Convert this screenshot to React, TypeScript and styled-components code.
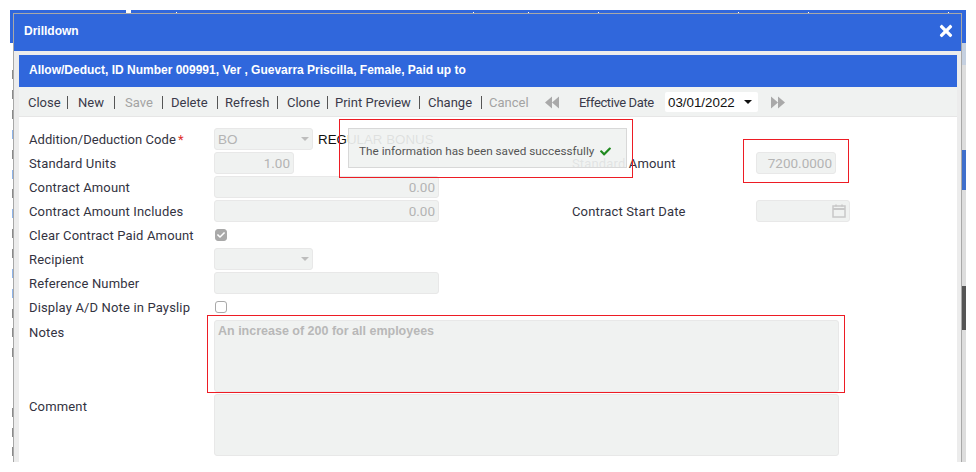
import React from 'react';
import styled, { createGlobalStyle } from 'styled-components';
import { FaCheck, FaTimes } from 'react-icons/fa';

const GlobalStyle = createGlobalStyle`
  html, body {
    margin: 0;
    padding: 0;
    background: #fff;
  }
  body {
    width: 976px;
    height: 472px;
    overflow: hidden;
    font-family: Roboto, "Liberation Sans", sans-serif;
  }
`;

const Shot = styled.div`
  width: 976px;
  height: 472px;
  padding: 10px;
  box-sizing: border-box;
`;

// little white ticks in the blue bar of the page behind the dialog
const ticks = [166, 463, 518, 588, 728, 798, 938]
  .map(x => `linear-gradient(#fff, #fff) ${x}px 2px / 1px 1px no-repeat`)
  .join(', ');

const Backdrop = styled.div`
  width: 956px;
  height: 452px;
  display: flex;
  overflow: hidden;
  background:
    ${ticks},
    linear-gradient(#fff, #fff) 116px 0 / 5px 3px no-repeat,
    linear-gradient(#3067dc, #3067dc) 0 0 / 100% 3px no-repeat;
`;

const LeftStrip = styled.div`
  width: 3px;
  flex: none;
  padding-top: 55px;
  box-sizing: border-box;
  background: linear-gradient(#3067dc 33px, #fff 33px);
  display: flex;
  flex-direction: column;
  overflow: hidden;
`;

const StripRow = styled.div`
  height: 20px;
  display: flex;
  justify-content: flex-end;
  align-items: center;
`;

const StripMark = styled.span<{ $blue?: boolean }>`
  width: 1px;
  height: 9px;
  background: ${p => (p.$blue ? '#8fb4e8' : '#8a8a8a')};
`;

const RightStrip = styled.div`
  width: 4px;
  flex: none;
  background: linear-gradient(
    #3067dc 33px,
    #c5d0e0 33px 55px,
    #ddd 55px 140px,
    #3f6fcb 140px 180px,
    #ddd 180px 276px,
    #555 276px 320px,
    #ddd 320px
  );
`;

const Dialog = styled.div`
  flex: 1;
  margin-top: 3px;
  border: 1px solid #a8a8a8;
  border-bottom: 0;
  background: #ececec;
  display: flex;
  flex-direction: column;
  min-width: 0;
`;

const DialogHeader = styled.div`
  height: 37px;
  flex: none;
  background: #3067dc;
  color: #fff;
  display: flex;
  align-items: center;
  justify-content: space-between;
  padding: 0 6px 4px 10px;
  box-sizing: border-box;
  font: bold 12px "Liberation Sans", sans-serif;
`;

const Panel = styled.div`
  flex: 1;
  margin: 4px 4px 0 5px;
  background: #fff;
  display: flex;
  flex-direction: column;
  position: relative;
  min-height: 0;
`;

const TitleBar = styled.div`
  height: 32px;
  flex: none;
  background: #3067dc;
  color: #fff;
  display: flex;
  align-items: center;
  padding: 0 0 2px 10px;
  box-sizing: border-box;
  font: bold 12px "Liberation Sans", sans-serif;
`;

const Toolbar = styled.div`
  height: 30px;
  flex: none;
  background: #f0f2f1;
  border-bottom: 1px solid #e6e6e6;
  box-sizing: border-box;
  display: flex;
  align-items: center;
  padding: 1px 0 0 9px;
  font-size: 13px;
  color: #3a3a4a;
`;

const ToolButton = styled.span<{ $left: number; $width: number; $disabled?: boolean; $last?: boolean }>`
  margin-left: ${p => p.$left}px;
  width: ${p => p.$width}px;
  box-sizing: border-box;
  line-height: 13px;
  white-space: nowrap;
  border-right: ${p => (p.$last ? '0' : '1px solid #555')};
  color: ${p => (p.$disabled ? '#a3a3a3' : '#3a3a4a')};
`;

const EffectiveDate = styled.span`
  width: 86px;
  margin-left: 20px;
  letter-spacing: -0.4px;
  white-space: nowrap;
`;

const DateSelect = styled.div`
  width: 93px;
  height: 20px;
  margin-right: 13px;
  padding: 0 6px 0 3px;
  box-sizing: border-box;
  background: #fff;
  border-radius: 2px;
  display: flex;
  align-items: center;
  justify-content: space-between;
  font: 13.33px "Liberation Sans", sans-serif;
  color: #111;
`;

const Caret = styled.span<{ $muted?: boolean }>`
  width: 0;
  height: 0;
  border-left: 4px solid transparent;
  border-right: 4px solid transparent;
  border-top: 4px solid ${p => (p.$muted ? '#bdbdbd' : '#111')};
`;

const Form = styled.div`
  padding: 11px 0 0 10px;
  display: grid;
  grid-template-columns: 185px 358px 184px 1fr;
  grid-template-rows: repeat(8, 22px) 72px 62px;
  row-gap: 2px;
  align-items: center;
  font-size: 13px;
  letter-spacing: 0.15px;
  color: #33333f;
`;

const Label = styled.label<{ $top?: boolean; $tight?: boolean }>`
  grid-column: 1;
  white-space: nowrap;
  align-self: ${p => (p.$top ? 'start' : 'center')};
  line-height: ${p => (p.$top ? '26px' : 'normal')};
  letter-spacing: ${p => (p.$tight ? '0.05px' : 'inherit')};
`;

const SideLabel = styled.label`
  grid-column: 3;
  white-space: nowrap;
`;

const Star = styled.span`
  color: #e0302a;
  margin-left: 2px;
`;

const Cell = styled.div`
  grid-column: 2;
`;

const SideCell = styled.div`
  grid-column: 4;
`;

const Control = styled.div<{ $width: number }>`
  width: ${p => p.$width}px;
  height: 22px;
  box-sizing: border-box;
  background: #f0f2f1;
  border: 1px solid #e8e8e8;
  border-radius: 3px;
  display: flex;
  align-items: center;
  justify-content: space-between;
  padding: 0 3px;
  color: #b4b4b4;
  font-size: 13.5px;
  letter-spacing: 0;
`;

const NumberControl = styled(Control)`
  justify-content: flex-end;
`;

const CodeRow = styled.div`
  grid-column: 2;
  display: flex;
  align-items: center;
  gap: 5px;
  font: 13.33px "Liberation Sans", sans-serif;
  letter-spacing: 0;
  color: #111;
`;

const Check = styled.span<{ $checked?: boolean }>`
  width: 12px;
  height: 12px;
  margin-left: 1px;
  box-sizing: border-box;
  border-radius: 3px;
  border: 1px solid #a9a9a9;
  background: ${p => (p.$checked ? '#a9a9a9' : '#fff')};
  color: #fff;
  display: flex;
  align-items: center;
  justify-content: center;
  font-size: 8px;
`;

const TextArea = styled.div`
  grid-column: 2 / 5;
  width: 625px;
  height: 100%;
  box-sizing: border-box;
  background: #f0f2f1;
  border: 1px solid #e8e8e8;
  border-radius: 3px;
  padding: 3px 3px;
  color: #b8b8b8;
  font: bold 12.5px "Liberation Sans", sans-serif;
  letter-spacing: 0;
`;

const Toast = styled.div`
  position: absolute;
  left: 329px;
  top: 73px;
  width: 279px;
  height: 40px;
  box-sizing: border-box;
  background: rgba(240, 242, 241, 0.92);
  border: 1px solid #d8d8d8;
  display: flex;
  align-items: center;
  padding: 6px 0 0 10px;
  font-size: 11.75px;
  color: #555;
  gap: 6px;
`;

const RedBox = styled.div<{ $l: number; $t: number; $w: number; $h: number }>`
  position: absolute;
  left: ${p => p.$l}px;
  top: ${p => p.$t}px;
  width: ${p => p.$w}px;
  height: ${p => p.$h}px;
  box-sizing: border-box;
  border: 1px solid #ed1c24;
`;

const CalendarIcon = () => (
  <svg width="14" height="14" viewBox="0 0 14 14" fill="none" stroke="#c8c8c8" strokeWidth="1.5">
    <rect x="1" y="2" width="12" height="11" />
    <path d="M1 5h12" strokeWidth="2" />
    <path d="M4 .5v2M10 .5v2" />
  </svg>
);

const SkipIcon = ({ flip }: { flip?: boolean }) => (
  <svg width="14" height="13" viewBox="0 0 15 13" fill="#a9a9a9" style={flip ? { transform: 'scaleX(-1)' } : undefined}>
    <path d="M0 0l7.5 6.5L0 13zM7.5 0L15 6.5 7.5 13z" />
  </svg>
);

const tools: { name: string; left: number; width: number; disabled?: boolean; last?: boolean }[] = [
  { name: 'Close', left: 0, width: 40 },
  { name: 'New', left: 10, width: 37 },
  { name: 'Save', left: 10, width: 38, disabled: true },
  { name: 'Delete', left: 8, width: 47 },
  { name: 'Refresh', left: 7, width: 53 },
  { name: 'Clone', left: 9, width: 41 },
  { name: 'Print Preview', left: 7, width: 85 },
  { name: 'Change', left: 8, width: 54 },
  { name: 'Cancel', left: 7, width: 56, disabled: true, last: true },
];

// what shows of the page's text rows, in the sliver left of the dialog
const stripRows: ('grey' | 'blue' | null)[] = [
  'grey', 'grey', 'grey', 'blue', 'grey', 'blue', 'grey', 'blue', 'grey', 'grey',
  'blue', 'blue', 'grey', 'grey', 'grey', null, null, 'grey', 'grey', 'grey',
];

export default function App() {
  return (
    <Shot>
      <GlobalStyle />
      <Backdrop>
        <LeftStrip>
          {stripRows.map((r, i) => (
            <StripRow key={i}>{r && <StripMark $blue={r === 'blue'} />}</StripRow>
          ))}
        </LeftStrip>
        <Dialog>
          <DialogHeader>
            Drilldown
            <FaTimes color="#fff" size={18} />
          </DialogHeader>
          <Panel>
            <TitleBar>Allow/Deduct, ID Number 009991, Ver , Guevarra Priscilla, Female, Paid up to</TitleBar>
            <Toolbar>
              {tools.map(t => (
                <ToolButton key={t.name} $left={t.left} $width={t.width} $disabled={t.disabled} $last={t.last}>{t.name}</ToolButton>
              ))}
              <SkipIcon flip />
              <EffectiveDate>Effective Date</EffectiveDate>
              <DateSelect>03/01/2022<Caret /></DateSelect>
              <SkipIcon />
            </Toolbar>
            <Form>
              <Label $tight>Addition/Deduction Code<Star>*</Star></Label>
              <CodeRow>
                <Control $width={99}>BO<Caret $muted /></Control>
                REGULAR BONUS
              </CodeRow>
              <Label>Standard Units</Label>
              <Cell><NumberControl $width={80}>1.00</NumberControl></Cell>
              <SideLabel>Standard Amount</SideLabel>
              <SideCell><NumberControl $width={80}>7200.0000</NumberControl></SideCell>
              <Label>Contract Amount</Label>
              <Cell><NumberControl $width={225}>0.00</NumberControl></Cell>
              <Label>Contract Amount Includes</Label>
              <Cell><NumberControl $width={225}>0.00</NumberControl></Cell>
              <SideLabel>Contract Start Date</SideLabel>
              <SideCell><Control $width={94}><span /><CalendarIcon /></Control></SideCell>
              <Label>Clear Contract Paid Amount</Label>
              <Cell><Check $checked><FaCheck /></Check></Cell>
              <Label>Recipient</Label>
              <Cell><Control $width={99}><span /><Caret $muted /></Control></Cell>
              <Label>Reference Number</Label>
              <Cell><Control $width={225} /></Cell>
              <Label>Display A/D Note in Payslip</Label>
              <Cell><Check /></Cell>
              <Label $top>Notes</Label>
              <TextArea>An increase of 200 for all employees</TextArea>
              <Label $top>Comment</Label>
              <TextArea />
            </Form>
            <Toast>
              The information has been saved successfully
              <FaCheck color="#1f8a1f" size={11} />
            </Toast>
            <RedBox $l={320} $t={64} $w={294} $h={59} />
            <RedBox $l={724} $t={84} $w={106} $h={44} />
            <RedBox $l={188} $t={260} $w={638} $h={78} />
          </Panel>
        </Dialog>
        <RightStrip />
      </Backdrop>
    </Shot>
  );
}
